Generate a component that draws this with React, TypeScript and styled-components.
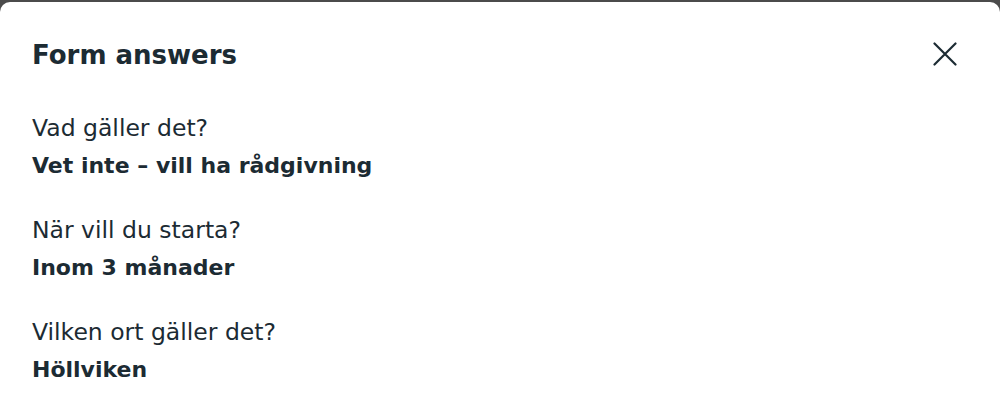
import React from 'react';
import styled, { createGlobalStyle } from 'styled-components';

const GlobalStyle = createGlobalStyle`
  html, body {
    margin: 0;
    padding: 0;
    background: #4b4b4b;
  }
  body {
    font-family: 'DejaVu Sans', 'Inter', sans-serif;
    color: #1c2b33;
  }
`;

const Page = styled.div`
  width: 1000px;
  height: 403px;
  padding-top: 2px;
  box-sizing: border-box;
  background: #4b4b4b;
`;

const Panel = styled.div`
  height: 100%;
  background: #ffffff;
  border-radius: 10px 10px 0 0;
  padding: 35px 32px 0 32px;
  box-sizing: border-box;
`;

const Header = styled.div`
  display: flex;
  align-items: center;
  justify-content: space-between;
  margin-bottom: 36px;
`;

const Title = styled.h2`
  margin: 0;
  font-size: 26px;
  line-height: 36px;
  font-weight: 700;
  color: #1c2b33;
`;

const CloseButton = styled.button`
  width: 36px;
  height: 36px;
  margin-right: 5px;
  margin-top: -2px;
  border: none;
  background: transparent;
  padding: 0;
  display: flex;
  align-items: center;
  justify-content: center;
  color: #1c2b33;
  cursor: pointer;
`;

const Answers = styled.div`
  display: flex;
  flex-direction: column;
  gap: 26px;
`;

const Answer = styled.div`
  display: flex;
  flex-direction: column;
`;

const Question = styled.div`
  font-size: 23.5px;
  line-height: 38px;
  font-weight: 400;
`;

const Value = styled.div`
  font-size: 22px;
  line-height: 38px;
  font-weight: 700;
`;

const answers = [
  { q: 'Vad gäller det?', a: 'Vet inte – vill ha rådgivning' },
  { q: 'När vill du starta?', a: 'Inom 3 månader' },
  { q: 'Vilken ort gäller det?', a: 'Höllviken' },
];

const App: React.FC = () => (
  <>
    <GlobalStyle />
    <Page>
      <Panel>
        <Header>
          <Title>Form answers</Title>
          <CloseButton aria-label="Close">
            <svg width="24" height="24" viewBox="0 0 24 24" fill="none">
              <path d="M1.5 1.5 L22.5 22.5 M22.5 1.5 L1.5 22.5" stroke="currentColor" strokeWidth="2.2" strokeLinecap="round" />
            </svg>
          </CloseButton>
        </Header>
        <Answers>
          {answers.map((item) => (
            <Answer key={item.q}>
              <Question>{item.q}</Question>
              <Value>{item.a}</Value>
            </Answer>
          ))}
        </Answers>
      </Panel>
    </Page>
  </>
);

export default App;
